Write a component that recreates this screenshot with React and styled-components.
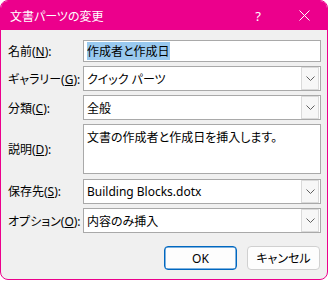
import styled, { createGlobalStyle } from 'styled-components';

const Global = createGlobalStyle`
    html, body {
        margin: 0;
        padding: 0;
        background: #ffffff;
    }
    body {
        font-family: 'Noto Sans', 'Noto Sans CJK JP', sans-serif;
        font-feature-settings: 'palt';
        font-size: 12px;
        color: #000000;
    }
`;

const Window = styled.div`
    width: 328px;
    height: 280px;
    box-sizing: border-box;
    border: 1px solid #ec008c;
    border-radius: 8px;
    background: #f0f0f0;
    display: flex;
    flex-direction: column;
    overflow: hidden;
`;

const TitleBar = styled.div`
    height: 29px;
    background: #ec008c;
    color: #ffffff;
    display: flex;
    align-items: center;
    padding-left: 9px;
    flex-shrink: 0;
`;

const Title = styled.span`
    flex: 1;
    font-size: 12px;
`;

const TitleButton = styled.div`
    width: 46px;
    height: 29px;
    display: flex;
    align-items: center;
    justify-content: center;
    font-size: 13px;
`;

const Body = styled.div`
    padding: 10px 6px 0 7px;
    display: flex;
    flex-direction: column;
`;

const Form = styled.div`
    display: grid;
    grid-template-columns: 75px 1fr;
    row-gap: 4px;
    align-items: center;
`;

const Label = styled.label`
    white-space: nowrap;
    align-self: ${(p) => (p.top ? 'start' : 'center')};
    padding-top: ${(p) => (p.top ? '17px' : '0')};
`;

const Field = styled.div`
    height: ${(p) => p.h || 25}px;
    box-sizing: border-box;
    border: 1px solid #a9a9a9;
    background: #ffffff;
    display: flex;
    align-items: ${(p) => (p.multi ? 'flex-start' : 'center')};
    padding: ${(p) => (p.multi ? '3px 0 0 3px' : '0 0 0 3px')};
    margin-top: ${(p) => p.mt || 0}px;
`;

const Value = styled.span`
    flex: 1;
    white-space: nowrap;
    overflow: hidden;
`;

const Selected = styled.span`
    background: #99c9ef;
    padding: 1px 0;
`;

const DropButton = styled.div`
    width: 16px;
    height: 21px;
    margin-right: 1px;
    border: 1px solid #dadada;
    background: #f7f7f7;
    display: flex;
    align-items: center;
    justify-content: center;
`;

const Buttons = styled.div`
    display: flex;
    justify-content: flex-end;
    gap: 10px;
    margin-top: 13px;
    padding-right: 1px;
`;

const Button = styled.button`
    width: 73px;
    height: 24px;
    box-sizing: border-box;
    border-radius: 4px;
    border: 1px solid ${(p) => (p.primary ? '#0067c0' : '#d0d0d0')};
    box-shadow: ${(p) => (p.primary ? 'inset 0 0 0 0.5px #0067c0' : 'none')};
    background: #fdfdfd;
    font-family: inherit;
    font-feature-settings: 'palt';
    font-size: 12px;
    color: #000000;
    padding: 0;
`;

const Chevron = () => (
    <svg width="9" height="5" viewBox="0 0 9 5">
        <path d="M0.5 0.5 L4.5 4.5 L8.5 0.5" fill="none" stroke="#606060" strokeWidth="1" />
    </svg>
);

const Select = ({ children, mt }) => (
    <Field mt={mt}>
        <Value>{children}</Value>
        <DropButton><Chevron /></DropButton>
    </Field>
);

const App = () => {
    return (
        <>
            <Global />
            <Window>
                <TitleBar>
                    <Title>文書パーツの変更</Title>
                    <TitleButton>?</TitleButton>
                    <TitleButton>
                        <svg width="11" height="11" viewBox="0 0 11 11">
                            <path d="M0.5 0.5 L10.5 10.5 M10.5 0.5 L0.5 10.5" stroke="#ffffff" strokeWidth="1" />
                        </svg>
                    </TitleButton>
                </TitleBar>
                <Body>
                    <Form>
                        <Label>名前(<u>N</u>):</Label>
                        <Field h={22}>
                            <Value><Selected>作成者と作成日</Selected></Value>
                        </Field>

                        <Label>ギャラリー(<u>G</u>):</Label>
                        <Select>クイック パーツ</Select>

                        <Label>分類(<u>C</u>):</Label>
                        <Select>全般</Select>

                        <Label>説明(<u>D</u>):</Label>
                        <Field h={50} multi>
                            <Value>文書の作成者と作成日を挿入します。</Value>
                        </Field>

                        <Label>保存先(<u>S</u>):</Label>
                        <Select mt={1}>Building Blocks.dotx</Select>

                        <Label>オプション(<u>O</u>):</Label>
                        <Select>内容のみ挿入</Select>
                    </Form>
                    <Buttons>
                        <Button primary>OK</Button>
                        <Button>キャンセル</Button>
                    </Buttons>
                </Body>
            </Window>
        </>
    );
};

export default App;
